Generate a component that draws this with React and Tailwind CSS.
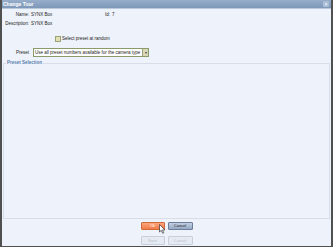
export default function App() {
  return (
    <div
      className="w-[333px] h-[247px] flex flex-col bg-[#eef2fa] border-l-2 border-r-2 border-b border-[#505050] text-[4.5px] leading-[6px] text-[#222]"
      style={{ fontFamily: '"Liberation Sans", Arial, sans-serif' }}
    >
      <div className="h-[9px] shrink-0 flex items-center justify-between pl-[1px] pr-[2px] bg-gradient-to-b from-[#97aecb] to-[#7e98ba] border-b border-[#b9c8db]">
        <span className="text-white font-bold text-[5px]">Change Tour</span>
        <span className="w-[6px] h-[6px] flex items-center justify-center rounded-[1px] bg-[#a9bdd6] text-white text-[5px] leading-none">×</span>
      </div>

      <div className="flex flex-col pt-[3px]">
        <div className="flex items-center h-[6px]">
          <span className="w-[27px] text-right">Name:</span>
          <span className="ml-[2px] w-[74px]">SYNX Box</span>
          <span className="w-[5px]">Id:</span>
          <span className="ml-[2px]">7</span>
        </div>
        <div className="flex items-center h-[6px] mt-[3px]">
          <span className="w-[27px] text-right">Description:</span>
          <span className="ml-[2px]">SYNX Box</span>
        </div>
        <div className="flex items-center h-[7px] mt-[8px] pl-[53px]">
          <span className="w-[6px] h-[6px] border border-[#9aa27a] bg-[#e3e0b4]" />
          <span className="ml-[1px]">Select preset at random</span>
        </div>
        <div className="flex items-center h-[9px] mt-[6px]">
          <span className="w-[27px] text-right">Preset</span>
          <div className="ml-[4px] w-[116px] h-[9px] flex items-center border border-[#8a9a6a] bg-white">
            <span className="flex-1 pl-[1px] whitespace-nowrap overflow-hidden">Use all preset numbers available for the camera type</span>
            <span className="w-[6px] h-[7px] flex items-center justify-center bg-[#d8d7b8] border-l border-[#9aa27a] text-[4px] text-[#444]">▾</span>
          </div>
        </div>
      </div>

      <fieldset className="mt-[3px] ml-[1px] mr-[1px] h-[159px] border border-[#d8dde8] px-[2px] bg-[#eef2fa]">
        <legend className="text-[#5a7eb0] font-bold text-[4.5px] px-[1px]">Preset Selection</legend>
      </fieldset>

      <div className="flex flex-col items-center gap-[6px] mt-[3px]">
        <div className="flex gap-[3px]">
          <div className="relative">
            <button className="w-[24px] h-[8px] rounded-[1px] border border-[#d06a3a] bg-gradient-to-b from-[#fba57c] to-[#f07a46] text-white text-[4px] leading-none">Ok</button>
            <svg className="absolute left-[18px] top-[2px]" width="7" height="10" viewBox="0 0 7 10">
              <path d="M0.5 0.5 L0.5 8 L2.3 6.3 L3.6 9.3 L4.8 8.8 L3.5 5.9 L6 5.9 Z" fill="#ffffff" stroke="#333" strokeWidth="0.7" strokeLinejoin="round" />
            </svg>
          </div>
          <button className="w-[25px] h-[8px] rounded-[1px] border border-[#6c7f9a] bg-gradient-to-b from-[#c3d0e2] to-[#95a9c6] text-[#222] text-[4px] leading-none">Cancel</button>
        </div>
        <div className="flex gap-[3px]">
          <button className="w-[24px] h-[9px] rounded-[1px] border border-[#c8d0dd] bg-[#e6ebf3] text-[#b8c0cc] text-[4px] leading-none">Save</button>
          <button className="w-[25px] h-[9px] rounded-[1px] border border-[#c8d0dd] bg-[#e6ebf3] text-[#b8c0cc] text-[4px] leading-none">Cancel</button>
        </div>
      </div>
    </div>
  )
}
